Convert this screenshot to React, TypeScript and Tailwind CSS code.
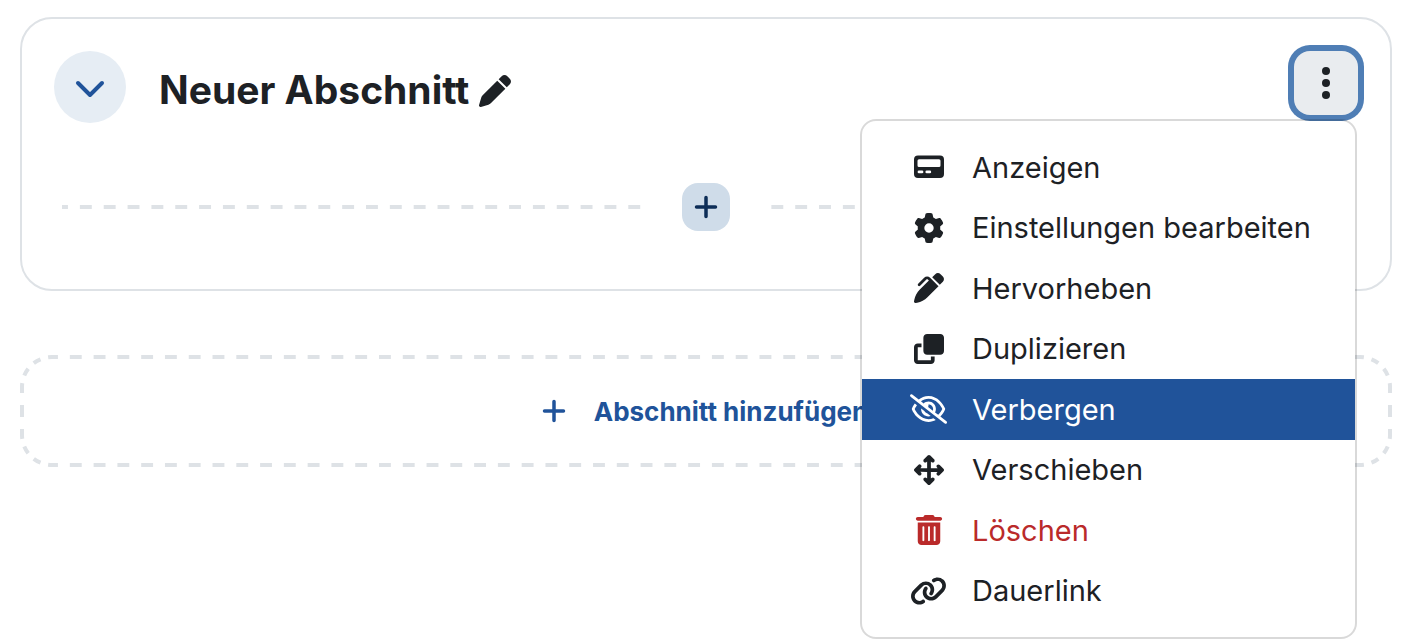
import React from 'react';
import {
  FaArrowsUpDownLeftRight,
  FaClone,
  FaGear,
  FaLink,
  FaPen,
  FaPenClip,
  FaRegEyeSlash,
  FaTrashCan,
} from 'react-icons/fa6';

function CardIcon({ className }: { className?: string }) {
  return (
    <svg viewBox="0 0 30 30" className={className} fill="currentColor" aria-hidden="true">
      <path
        fillRule="evenodd"
        d="M4 3.500h22a4 4 0 0 1 4 4v14.500a4 4 0 0 1-4 4H4a4 4 0 0 1-4-4V7.500a4 4 0 0 1 4-4ZM5 7.300A1.500 1.500 0 0 0 3.500 8.800v4.800A1.500 1.500 0 0 0 5 15.100h20a1.500 1.500 0 0 0 1.500-1.500V8.800A1.500 1.500 0 0 0 25 7.300ZM5 18.500a1.400 1.400 0 0 0 0 2.800h3a1.400 1.400 0 0 0 0-2.800ZM12.800 18.500a1.400 1.400 0 0 0 0 2.800h3a1.400 1.400 0 0 0 0-2.800Z"
      />
    </svg>
  );
}

function PlusIcon({ className }: { className?: string }) {
  return (
    <svg viewBox="0 0 24 24" className={className} fill="none" stroke="currentColor" strokeWidth="3.500" strokeLinecap="round" aria-hidden="true">
      <path d="M12 2.500v19M2.500 12h19" />
    </svg>
  );
}

// quarter of the dashed frame, rotated for the other corners
function Corner({ className }: { className: string }) {
  return (
    <svg viewBox="0 0 32 32" className={`absolute size-8 ${className}`} fill="none" stroke="#dee2e6" strokeWidth="4" aria-hidden="true">
      <path d="M2 32A30 30 0 0 1 32 2" pathLength="48" strokeDasharray="8 8" strokeDashoffset="4" />
    </svg>
  );
}

const dashX =
  'bg-[linear-gradient(90deg,#dee2e6_25%,transparent_25%,transparent_75%,#dee2e6_75%)] bg-[length:24px_4px]';
const dashY =
  'bg-[linear-gradient(180deg,#dee2e6_25%,transparent_25%,transparent_75%,#dee2e6_75%)] bg-[length:4px_24px]';

const items = [
  { label: 'Anzeigen', Icon: CardIcon, size: 'size-[30px]' },
  { label: 'Einstellungen bearbeiten', Icon: FaGear, size: 'size-[30px]' },
  { label: 'Hervorheben', Icon: FaPenClip, size: 'size-[30px]' },
  { label: 'Duplizieren', Icon: FaClone, size: 'size-[30px]' },
  { label: 'Verbergen', Icon: FaRegEyeSlash, size: 'w-[37px] h-[30px]', active: true },
  { label: 'Verschieben', Icon: FaArrowsUpDownLeftRight, size: 'size-[30px]' },
  { label: 'Löschen', Icon: FaTrashCan, size: 'size-[30px]', danger: true },
  { label: 'Dauerlink', Icon: FaLink, size: 'w-[37px] h-[30px]' },
];

function ActionMenu() {
  return (
    <div
      role="menu"
      className="absolute right-px top-[68px] z-10 grid h-[520px] w-[497px] auto-rows-fr rounded-2xl border-2 border-black/15 bg-white bg-clip-padding py-4"
    >
      {items.map(({ label, Icon, size, active, danger }) => (
        <a
          key={label}
          href="#"
          role="menuitem"
          className={`flex items-center gap-[25px] pl-12 text-[29px] ${
            active ? 'bg-[#20539a] text-white' : danger ? 'text-[#ba2a2a]' : 'text-[#1d2125]'
          }`}
        >
          <span className="flex w-[37px] shrink-0 justify-center">
            <Icon className={`shrink-0 ${size}`} />
          </span>
          {label}
        </a>
      ))}
    </div>
  );
}

function App() {
  return (
    <div className="min-h-screen bg-white pl-5 pr-4 pt-[17px] font-['Inter','Liberation_Sans',sans-serif] text-[#1d2125]">
      <section className="rounded-[32px] border-2 border-[#dee2e6] px-8 pb-[58px] pt-8">
        <header className="flex items-start">
          <button
            type="button"
            aria-label="Einklappen"
            className="flex size-[72px] items-center justify-center rounded-full bg-[#e6edf4] text-[#20539a]"
          >
            <svg viewBox="0 0 30 18" className="mt-1 h-[18px] w-[30px]" fill="none" stroke="currentColor" strokeWidth="4" strokeLinecap="round" strokeLinejoin="round">
              <path d="M3 3l12 12L27 3" />
            </svg>
          </button>
          <div className="ml-[33px] flex h-[76px] items-center gap-[10px]">
            <h3 className="text-[39px] font-bold leading-none">Neuer Abschnitt</h3>
            <a href="#" aria-label="Titel bearbeiten">
              <FaPen className="mt-1 size-8" />
            </a>
          </div>
          <div className="relative ml-auto">
            <button
              type="button"
              aria-label="Aktionen"
              aria-haspopup="menu"
              aria-expanded="true"
              className="flex size-16 items-center justify-center rounded-2xl bg-[#e9ecef] ring-6 ring-[#4f7eb5]"
            >
              <svg viewBox="0 0 8 32" className="h-8 w-2" fill="currentColor">
                <circle cx="4" cy="4" r="4" />
                <circle cx="4" cy="16" r="4" />
                <circle cx="4" cy="28" r="4" />
              </svg>
            </button>
            <ActionMenu />
          </div>
        </header>

        <div className={`mx-2 mt-14 flex justify-center bg-left [background-repeat:round_no-repeat] ${dashX}`}>
          <div className="bg-white px-10">
            <button
              type="button"
              aria-label="Inhalt hinzufügen"
              className="flex size-12 items-center justify-center rounded-2xl bg-[#cfdce9] text-[#0d2d57]"
            >
              <PlusIcon className="size-6" />
            </button>
          </div>
        </div>
      </section>

      <div className="relative mt-16 flex h-28 items-center justify-center">
        <span className={`absolute inset-x-8 top-0 h-1 [background-repeat:round_no-repeat] ${dashX}`} />
        <span className={`absolute inset-x-8 bottom-0 h-1 [background-repeat:round_no-repeat] ${dashX}`} />
        <span className={`absolute inset-y-8 left-0 w-1 ${dashY}`} />
        <span className={`absolute inset-y-8 right-0 w-1 ${dashY}`} />
        <Corner className="left-0 top-0" />
        <Corner className="right-0 top-0 rotate-90" />
        <Corner className="bottom-0 right-0 rotate-180" />
        <Corner className="bottom-0 left-0 -rotate-90" />
        <button type="button" className="flex items-center gap-7 pr-0.5 text-[26px] font-bold text-[#20539a]">
          <PlusIcon className="size-6" />
          Abschnitt hinzufügen
        </button>
      </div>
    </div>
  );
}

export default App;
